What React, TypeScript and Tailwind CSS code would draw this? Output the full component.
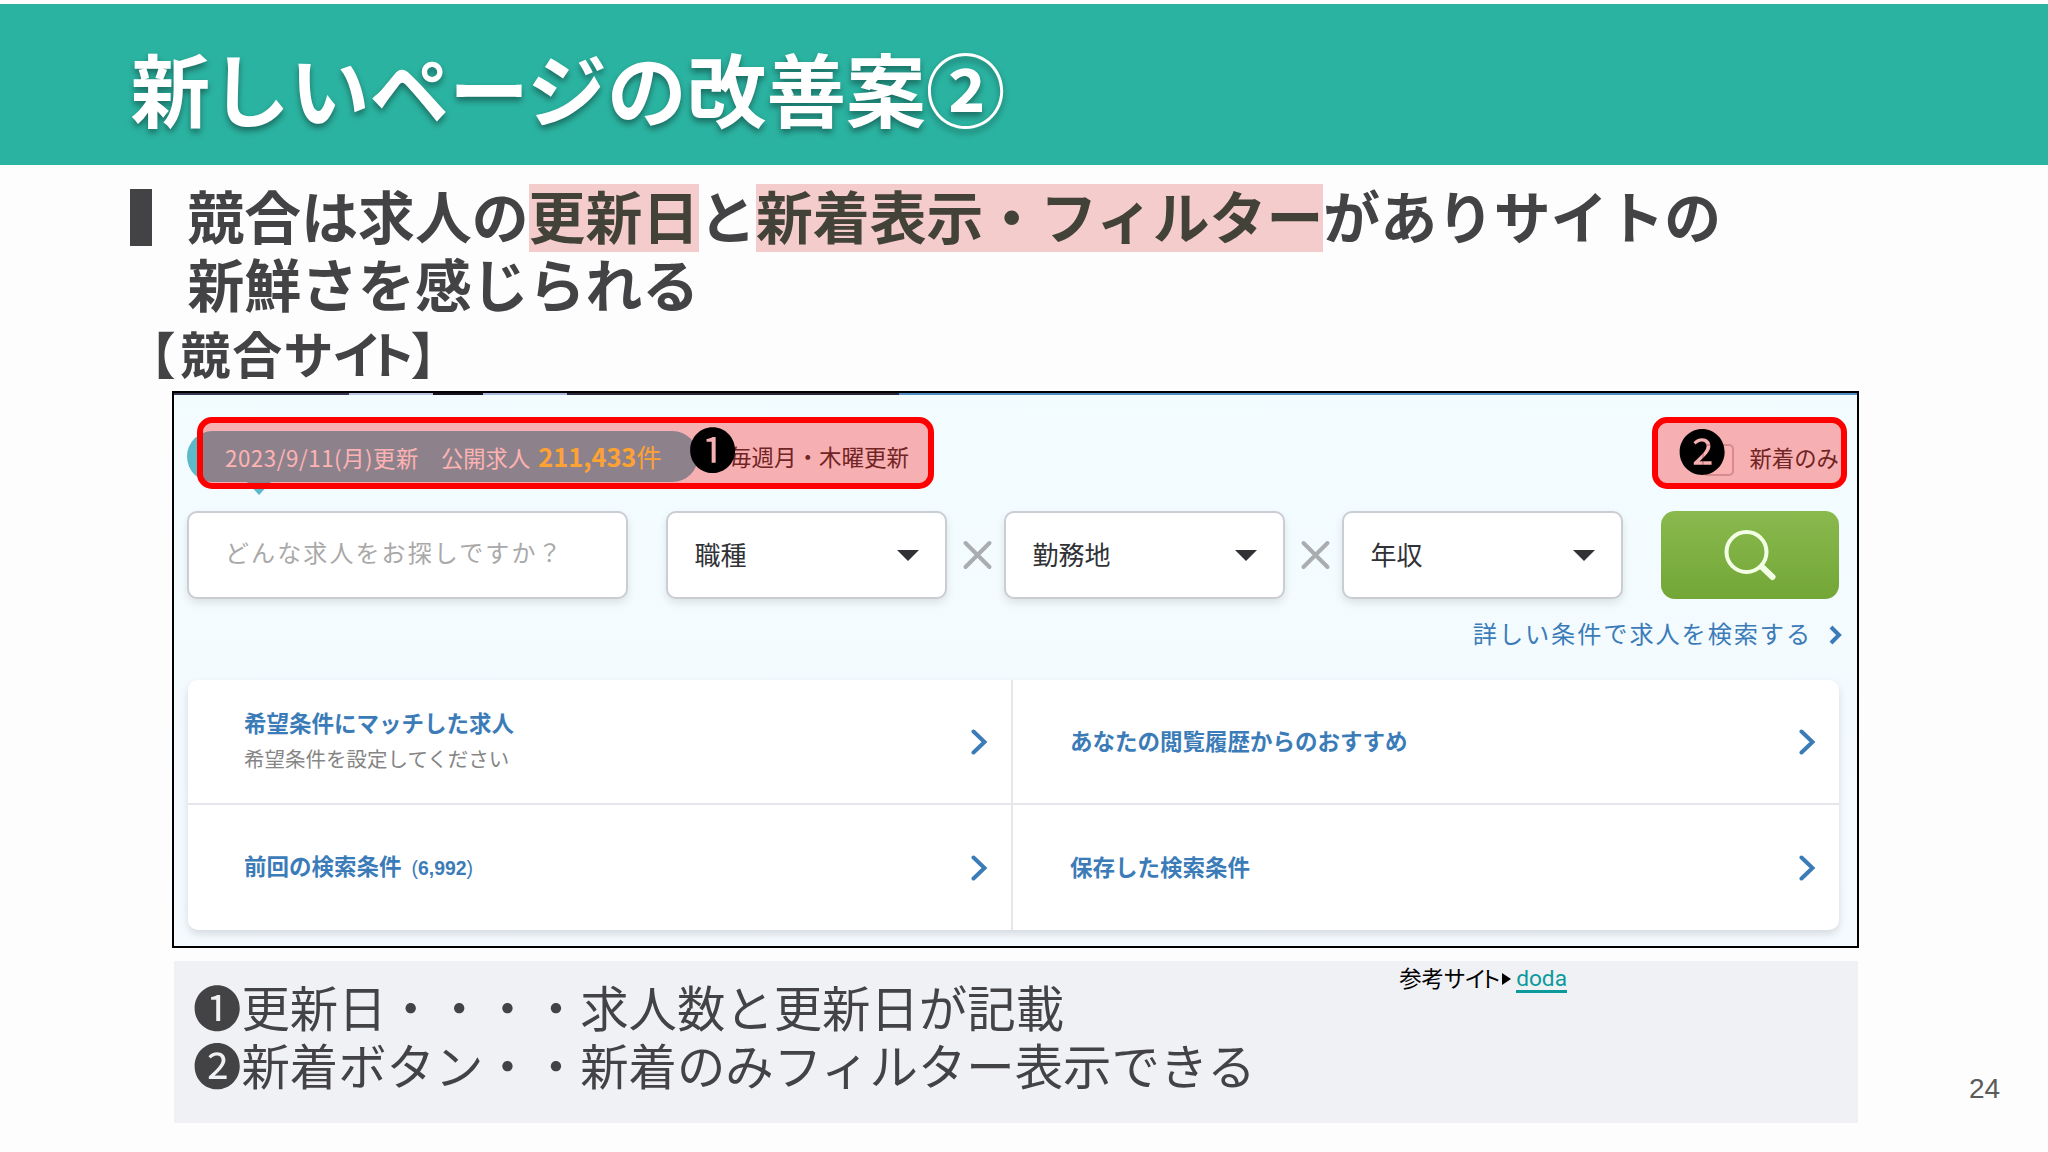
import type { ReactNode } from 'react';

interface SelectBoxProps {
  label: string;
}

function SelectBox({ label }: SelectBoxProps) {
  return (
    <div className="flex h-[88px] w-[281px] items-center justify-between rounded-[10px] border-2 border-[#cacdd2] bg-white pr-[26px] pl-[26.5px] shadow-[0_4px_8px_rgba(0,0,0,0.1)]">
      <span className="mb-[2px] text-[26px] leading-none text-[#303236]">{label}</span>
      <svg className="h-[11px] w-[22px]" viewBox="0 0 22 11">
        <path d="M0 0h22L11 11z" fill="#303236" />
      </svg>
    </div>
  );
}

function Cross() {
  return (
    <svg className="h-[30px] w-[57px]" viewBox="0 0 57 30">
      <path d="M18.5 3L42.5 27M42.5 3L18.5 27" stroke="#a9adb0" strokeWidth="4" strokeLinecap="round" />
    </svg>
  );
}

function Chevron() {
  return (
    <svg className="h-[26px] w-[18px]" viewBox="0 0 18 26" fill="none">
      <path d="M3.5 2.5L14.5 13L3.5 23.5" stroke="#3b7cb8" strokeWidth="4" strokeLinecap="round" />
    </svg>
  );
}

interface CardCellProps {
  children: ReactNode;
  className: string;
}

function CardCell({ children, className }: CardCellProps) {
  return (
    <div className={`flex items-center justify-between ${className}`}>
      <div className="mb-[2px]">{children}</div>
      <Chevron />
    </div>
  );
}

function CompetitorSite() {
  return (
    <div className="relative ml-[172px] h-[557px] w-[1687px] border-2 border-black bg-linear-to-b from-[#f2fcff] to-[#f5faff]">
      {/* bottom edge of the hero picture */}
      <div className="flex h-[2px]">
        <div className="w-[175px] bg-[#3a3550]" />
        <div className="w-[84px] bg-[#b9c3df]" />
        <div className="w-[50px] bg-[#17141f]" />
        <div className="w-[84px] bg-[#a9b8dc]" />
        <div className="w-[332px] bg-[#2b2739]" />
        <div className="flex-1 bg-[#4f8dc4]" />
      </div>

      <div className="mt-[36px] flex h-[51px] pr-[18px] pl-[13px]">
        <div className="relative flex w-[511px] items-center rounded-full bg-[#5cb9c9] pt-px pl-[38px] text-[22.3px] leading-none text-white">
          <span className="w-[216px] tracking-[0.55px]">2023/9/11(月)更新</span>
          <span>公開求人</span>
          <span className="ml-[8px] text-[25.4px] text-[#ffe84a]">
            <b>211,433</b>件
          </span>
          <svg className="absolute top-[50px] left-[59px] h-[14px] w-[26px]" viewBox="0 0 26 14">
            <path d="M0 0h26L13 14z" fill="#5cb9c9" />
          </svg>
        </div>
        <span className="mt-[14px] ml-[31px] text-[22.5px] leading-none text-[#333]">毎週月・木曜更新</span>
        <div className="mt-[13px] ml-auto flex h-[32px] items-center">
          <div className="h-[32px] w-[32px] rounded-[5px] border-2 border-[#c4c8cc] bg-white/30" />
          <span className="mb-[6px] ml-[15px] text-[22.4px] leading-none text-[#333]">新着のみ</span>
        </div>
      </div>

      <div className="mt-[29px] ml-[13px] flex items-center">
        <div className="flex h-[88px] w-[441px] items-center rounded-[10px] border-2 border-[#cacdd2] bg-white pb-[7px] pl-[36px] shadow-[0_4px_8px_rgba(0,0,0,0.1)]">
          <span className="text-[24px] leading-none tracking-[2.1px] text-[#a9a9a9]">どんな求人をお探しですか？</span>
        </div>
        <div className="ml-[38px] flex items-center">
          <SelectBox label="職種" />
          <Cross />
          <SelectBox label="勤務地" />
          <Cross />
          <SelectBox label="年収" />
        </div>
        <div className="ml-[38px] flex h-[88px] w-[178px] items-center justify-center rounded-[14px] bg-linear-to-b from-[#8ab94e] to-[#72a636]">
          <svg className="h-[54px] w-[56px]" viewBox="0 0 56 54" fill="none">
            <circle cx="24.5" cy="24" r="20" stroke="#f2ffe4" strokeWidth="4" />
            <path d="M40 39L50.5 49" stroke="#f2ffe4" strokeWidth="6" strokeLinecap="round" />
          </svg>
        </div>
      </div>

      <div className="mt-[23px] mr-[15px] flex h-[26px] items-center justify-end">
        <span className="mb-[4px] text-[24.2px] leading-none tracking-[1.9px] text-[#3b7cb8]">
          詳しい条件で求人を検索する
        </span>
        <svg className="mb-px ml-[16px] h-[20px] w-[14px]" viewBox="0 0 14 20" fill="none">
          <path d="M3 2L11 10L3 18" stroke="#3b7cb8" strokeWidth="4" />
        </svg>
      </div>

      <div className="mt-[32px] ml-[14px] grid h-[250px] w-[1651px] grid-cols-[825px_826px] grid-rows-2 rounded-[10px] bg-white text-[22.5px] leading-none font-bold text-[#3b7cb8] shadow-[0_4px_8px_rgba(0,0,0,0.13)]">
        <CardCell className="border-r-2 border-b-2 border-[#e6e6ea] pr-[23px] pl-[56px]">
          <p>希望条件にマッチした求人</p>
          <p className="mt-[14px] mb-[2px] text-[20.5px] font-normal text-[#858585]">希望条件を設定してください</p>
        </CardCell>
        <CardCell className="border-b-2 border-[#e6e6ea] pr-[23px] pl-[57px]">あなたの閲覧履歴からのおすすめ</CardCell>
        <CardCell className="border-r-2 border-[#e6e6ea] pr-[23px] pl-[56px]">
          前回の検索条件
          <span className="ml-[10px] font-['Liberation_Sans',sans-serif] text-[19.4px]">
            <span className="font-normal">(</span>6,992<span className="font-normal">)</span>
          </span>
        </CardCell>
        <CardCell className="pr-[23px] pl-[57px]">保存した検索条件</CardCell>
      </div>

      {/* callouts */}
      <div className="absolute top-[24px] left-[23px] h-[72px] w-[737px] rounded-[15px] border-[6.5px] border-[#ff0000] bg-[#ff0000]/30 bg-clip-padding" />
      <div className="absolute top-[24px] left-[1478px] h-[72px] w-[195px] rounded-[15px] border-[6.5px] border-[#ff0000] bg-[#ff0000]/30 bg-clip-padding" />
      <span className="absolute top-[30px] left-[514.5px] text-[48.3px] leading-none text-black">❶</span>
      <span className="absolute top-[32px] left-[1504px] text-[48.3px] leading-none text-black">❷</span>
    </div>
  );
}

export default function App() {
  return (
    <div className="flex h-[1152px] w-[2048px] flex-col overflow-hidden bg-[#fdfdfe] pt-[4px] font-['Noto_Sans_CJK_JP',sans-serif] text-[#434345]">
      <header className="flex h-[161px] items-center bg-[#2bb3a1] pt-[5px] pl-[130.5px]">
        <h1 className="text-[79.7px] leading-none font-bold text-white [text-shadow:0_4px_6px_rgba(0,0,0,0.4)]">
          新しいページの改善案②
        </h1>
      </header>

      <div className="mt-[19px] flex h-[137px] pl-[130px]">
        <div className="mt-[5px] h-[57px] w-[22px] bg-[#434345]" />
        <div className="ml-[35.5px] text-[56.85px] leading-[60px] font-bold whitespace-nowrap">
          <p className="flex h-[68px]">
            <span>競合は求人の</span>
            <span className="bg-[#f4cccc] text-[#434238]">更新日</span>
            <span>と</span>
            <span className="bg-[#f4cccc] text-[#434238]">新着表示・フィルター</span>
            <span>がありサイトの</span>
          </p>
          <p className="flex h-[68px]">新鮮さを感じられる</p>
        </div>
      </div>

      <h2 className="flex h-[70px] items-center pb-[8px] pl-[149.5px] text-[50px] leading-none font-bold [font-feature-settings:'palt']">
        <span className="tracking-[6px]">【</span>
        <span className="tracking-[1.7px]">競合サ</span>
        <span className="tracking-[-6.6px]">イ</span>
        <span className="tracking-[-1.8px]">ト</span>
        <span>】</span>
      </h2>

      <CompetitorSite />

      <div className="mt-[13px] flex h-[174px] items-start">
        <div className="ml-[174px] flex h-[162px] w-[1684px] justify-between bg-[#f0f1f4] pl-[19px]">
          <div className="pt-[16px] text-[48.4px] leading-[58px]">
            <p>❶更新日・・・・求人数と更新日が記載</p>
            <p>❷新着ボタン・・新着のみフィルター表示できる</p>
          </div>
          <p className="mt-[5px] mr-[291px] flex h-[26px] items-center text-[22.4px] leading-none text-black">
            <span className="mb-[3px] [font-feature-settings:'palt']">
              参考サ<span className="tracking-[-2px]">イ</span>ト
            </span>
            <svg className="mr-[5px] mb-px ml-[2px] h-[12px] w-[9px]" viewBox="0 0 9 12">
              <path d="M0 0L9 6L0 12z" fill="#000" />
            </svg>
            <a className="mt-[2px] border-b-[3px] border-[#0b9a9c] font-['Roboto',sans-serif] text-[22.7px] leading-[22px] text-[#0b9a9c]">
              doda
            </a>
          </p>
        </div>
        <span className="mt-[114px] ml-[111px] font-['Liberation_Sans',sans-serif] text-[28px] leading-none text-[#5b5b5d]">
          24
        </span>
      </div>
    </div>
  );
}
